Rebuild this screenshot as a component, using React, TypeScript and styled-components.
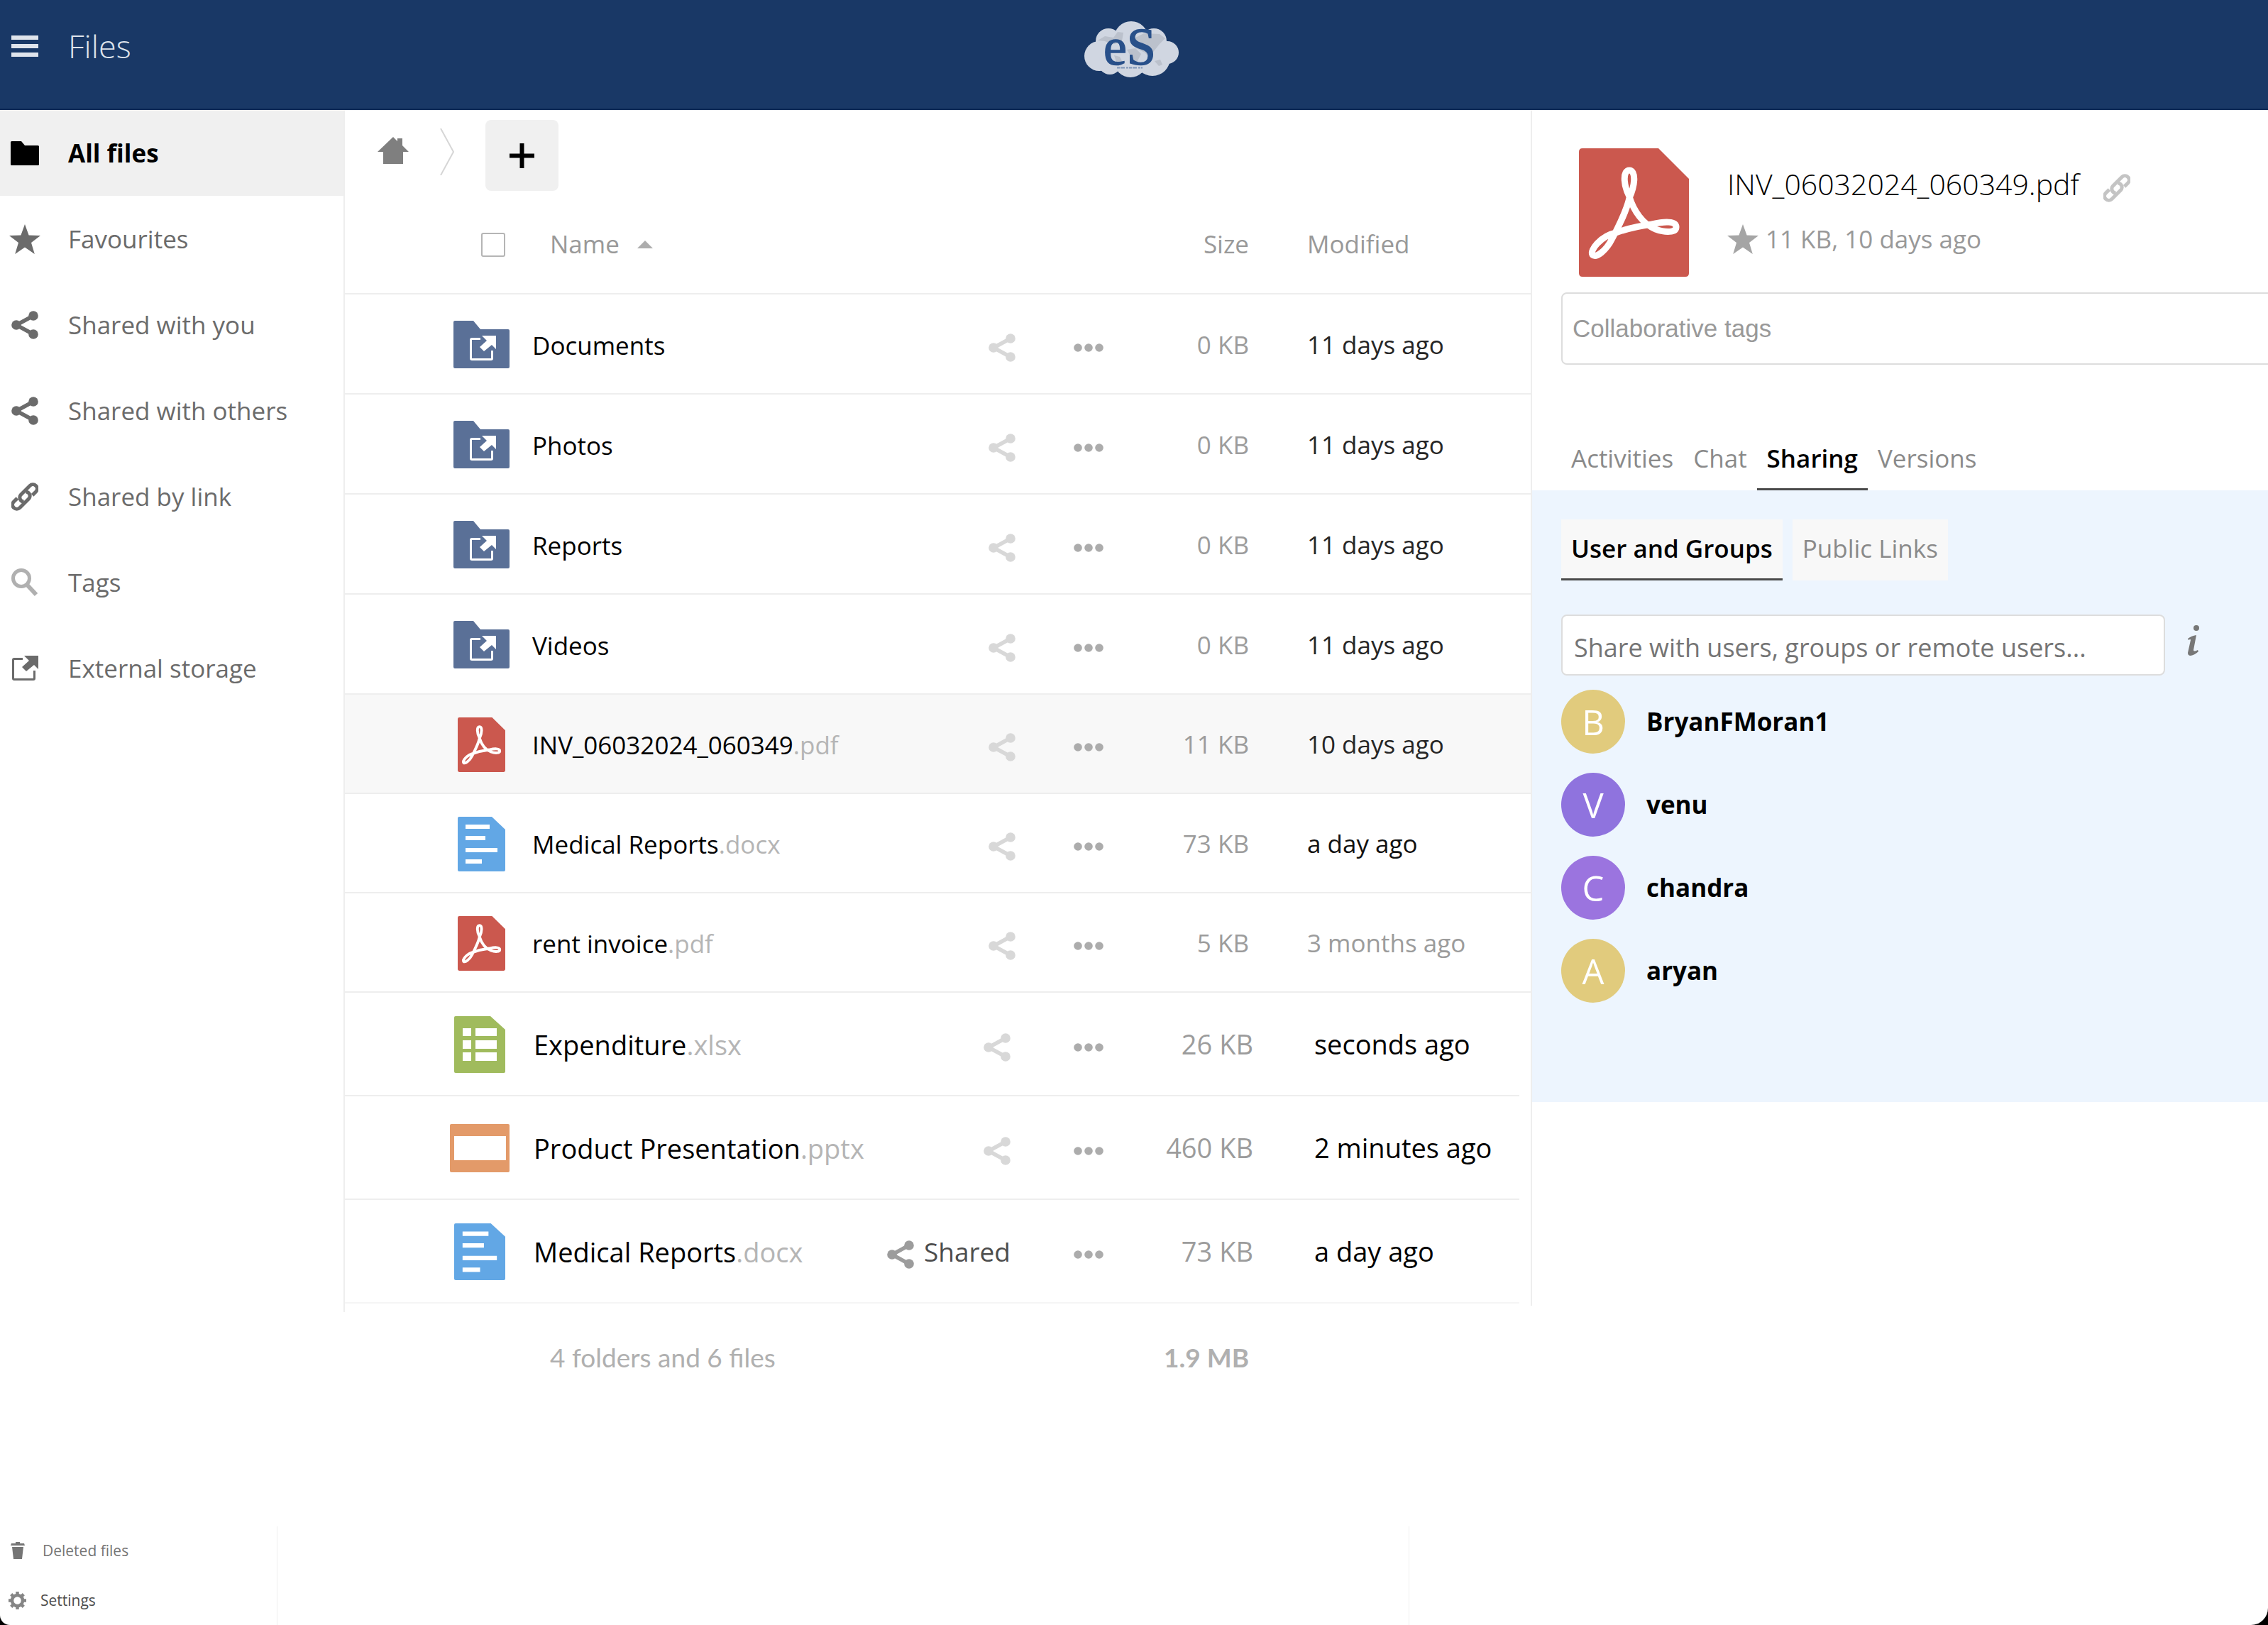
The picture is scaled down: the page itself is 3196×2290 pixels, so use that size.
import React from "react";
import styled, { createGlobalStyle, css } from "styled-components";

const sans = `"Open Sans", "Noto Sans", sans-serif`;

const colors = {
  navy: "#193866",
  rule: "#eeeeee",
  panel: "#edf5fe",
  muted: "#999999",
  nav: "#6b6b6b",
};

const GlobalStyle = createGlobalStyle`
  * { box-sizing: border-box; }
  body { margin: 0; background: #000; font-family: ${sans}; font-size: 35px; line-height: 48px; color: #000; }
  button, input { font: inherit; color: inherit; margin: 0; }
  button { border: 0; background: none; padding: 0; cursor: pointer; }
  a { color: inherit; text-decoration: none; }
  svg { display: block; flex: none; }
`;

const Page = styled.div`
  min-height: 100vh;
  display: flex;
  flex-direction: column;
  background: #fff;
  border-radius: 0 0 24px 14px;
  overflow: hidden;
`;

/* ---------- header ---------- */

const Header = styled.header`
  display: grid;
  grid-template-columns: 1fr auto 1fr;
  align-items: start;
  height: 155px;
  background: ${colors.navy};
  border-bottom: 2px solid #0f2a57;
`;

const AppMenu = styled.button`
  display: flex;
  align-items: center;
  gap: 42px;
  height: 130px;
  padding-left: 16px;
  color: #dfe4ec;
  font-size: 45px;
  font-weight: 300;
`;

const Logo = styled.a`
  padding: 20px 6px 0 0;
`;

/* ---------- columns ---------- */

const Columns = styled.div`
  display: flex;
`;

const Sidebar = styled.nav`
  flex: 0 0 486px;
  border-right: 2px solid ${colors.rule};
`;

const NavList = styled.ul`
  list-style: none;
  margin: 0;
  padding: 0;
`;

const NavLink = styled.a<{ $active?: boolean }>`
  display: flex;
  align-items: center;
  height: 121px;
  color: ${(p) => (p.$active ? "#000" : colors.nav)};
  background: ${(p) => (p.$active ? "#f0f0f0" : "transparent")};
  font-weight: ${(p) => (p.$active ? 700 : 400)};
`;

const NavIcon = styled.span<{ $faded?: boolean }>`
  display: flex;
  justify-content: center;
  width: 70px;
  margin-right: 26px;
  color: ${(p) => (p.$faded ? "#b0b0b0" : "inherit")};
`;

const FilePane = styled.main`
  flex: 1;
  min-width: 0;
  padding-bottom: 12px;
`;

const Toolbar = styled.div`
  display: flex;
  align-items: flex-start;
  height: 128px;
  padding: 14px 0 0 46px;
`;

const HomeLink = styled.a`
  padding: 24px 44px 0 0;
  color: #7f7f7f;
`;

const Crumb = styled.span`
  padding: 12px 44px 0 0;
`;

const AddButton = styled.button`
  display: flex;
  align-items: center;
  justify-content: center;
  width: 103px;
  height: 100px;
  border-radius: 8px;
  background: #f0f0f0;
`;

/* ---------- file table ---------- */

const Table = styled.table`
  width: 100%;
  table-layout: fixed;
  border-collapse: collapse;

  th, td { padding: 0; text-align: left; font-weight: 400; white-space: nowrap; }
`;

const Col = styled.col<{ $width?: number }>`
  width: ${(p) => (p.$width ? `${p.$width}px` : "auto")};
`;

const rule = (inset: number) => css`
  background-image: linear-gradient(${colors.rule}, ${colors.rule});
  background-position: left bottom;
  background-size: calc(100% - ${inset}px) 2px;
  background-repeat: no-repeat;
`;

const HeadRow = styled.tr`
  height: 132px;
  color: ${colors.muted};
  ${rule(0)}

  th { padding-bottom: 10px; }
`;

const SelectAll = styled.th`
  && { padding: 0 0 8px 192px; }
`;

const Checkbox = styled.input`
  appearance: none;
  display: block;
  width: 34px;
  height: 34px;
  border: 2px solid #b5b5b5;
  border-radius: 3px;
  background: #fff;
`;

const SortButton = styled.button`
  display: flex;
  align-items: center;
  gap: 25px;
  padding-left: 25px;
  color: ${colors.muted};
`;

type Density = "folder" | "file" | "roomy";

const rowHeight: Record<Density, number> = { folder: 141, file: 140, roomy: 146 };

const Row = styled.tr<{ $density: Density; $selected?: boolean }>`
  height: ${(p) => rowHeight[p.$density]}px;
  font-size: ${(p) => (p.$density === "roomy" ? 38 : 35)}px;
  background-color: ${(p) => (p.$selected ? "#f8f8f8" : "#fff")};
  ${(p) => rule(p.$density === "roomy" ? 16 : 0)}

  &:last-child {
    background-image: linear-gradient(#f5f5f5, #f5f5f5);
  }
`;

const IconCell = styled.td<{ $roomy: boolean }>`
  && { padding-left: ${(p) => (p.$roomy ? 140 : 142)}px; }
`;

const Thumb = styled.span`
  display: flex;
  justify-content: center;
  width: 100px;
`;

const NameCell = styled.td<{ $roomy: boolean }>`
  && { padding: ${(p) => (p.$roomy ? "0 0 0 2px" : "2px 0 0 0")}; }
`;

const Extension = styled.span`
  color: #b5b5b5;
`;

const ShareCell = styled.td<{ $roomy: boolean }>`
  && { padding: ${(p) => (p.$roomy ? "8px 52px 0 0" : "8px 45px 0 0")}; }
`;

const ShareButton = styled.button<{ $shared?: boolean }>`
  display: flex;
  align-items: center;
  gap: 14px;
  margin-left: auto;
  color: ${(p) => (p.$shared ? "#9c9c9c" : "#d8d8d8")};
`;

const SharedLabel = styled.span`
  color: #4d4d4d;
  font-size: 37px;
  padding-bottom: 8px;
`;

const MoreCell = styled.td`
  && { padding-top: 8px; }
`;

const MoreButton = styled.button`
  display: block;
  margin: 0 auto;
  color: #acacac;
`;

const SizeCell = styled.td<{ $roomy: boolean }>`
  && {
    padding: ${(p) => (p.$roomy ? "0 76px 2px 0" : "0 82px 0 0")};
    text-align: right;
    color: #9c9c9c;
  }
`;

const SizeHead = styled.th`
  && { padding-right: 82px; text-align: right; }
`;

const DateCell = styled.td<{ $roomy: boolean; $tone: string }>`
  && {
    padding: ${(p) => (p.$roomy ? "0 0 2px 10px" : "0")};
    color: ${(p) => p.$tone};
  }
`;

const Summary = styled.div`
  display: flex;
  justify-content: space-between;
  padding: 40px 1436px 0 775px;
  color: #b0b0b0;
  font-family: Lato, ${sans};
  font-size: 37px;
`;

/* ---------- details ---------- */

const Details = styled.aside`
  flex: 0 0 1039px;
  min-width: 0;
  margin-bottom: 9px;
  border-left: 2px solid ${colors.rule};
`;

const FileHead = styled.div`
  display: flex;
  gap: 54px;
  padding: 54px 0 0 66px;
`;

const FileTitle = styled.h2`
  display: flex;
  align-items: center;
  gap: 34px;
  margin: 22px 0 0;
  font-size: 41px;
  line-height: 56px;
  font-weight: 300;
`;

const CopyLink = styled.button`
  padding-top: 12px;
  color: #c4c4c4;
`;

const FileMeta = styled.div`
  display: flex;
  align-items: center;
  gap: 10px;
  margin-top: 26px;
  color: ${colors.muted};
`;

const MetaStar = styled.button`
  color: #a5a5a5;
`;

const TagsInput = styled.input`
  display: block;
  width: calc(100% - 20px);
  height: 102px;
  margin: 22px 0 0 41px;
  padding: 0 14px;
  border: 2px solid #dddddd;
  border-radius: 8px;
  font-family: "Liberation Sans", Arial, sans-serif;

  &::placeholder { color: ${colors.muted}; opacity: 1; }
`;

const Tabs = styled.div`
  display: flex;
  padding: 102px 0 0 41px;
`;

const Tab = styled.button<{ $active?: boolean }>`
  height: 75px;
  padding: 0 14px 12px;
  border-bottom: 3px solid ${(p) => (p.$active ? "#4a4a4a" : "transparent")};
  color: ${(p) => (p.$active ? "#000" : "#8a8a8a")};
  font-weight: ${(p) => (p.$active ? 600 : 400)};
`;

const SharePanel = styled.section`
  height: 862px;
  padding: 41px 0 0 41px;
  background: ${colors.panel};
`;

const SubTabs = styled.div`
  display: flex;
  gap: 14px;
`;

const SubTab = styled(Tab)`
  height: 86px;
  padding: 0 14px 2px;
  background: #f8f8f8;
`;

const ShareRow = styled.div`
  display: flex;
  align-items: center;
  gap: 31px;
  padding: 48px 0 20px;
`;

const ShareInput = styled.input`
  width: 851px;
  height: 86px;
  padding: 6px 16px 0;
  border: 2px solid #dddddd;
  border-radius: 8px;
  background: #fff;
  font-size: 36px;

  &::placeholder { color: #757575; opacity: 1; }
`;

const InfoButton = styled.button`
  padding-bottom: 14px;
  color: #777;
`;

const People = styled.ul`
  display: grid;
  gap: 27px;
  list-style: none;
  margin: 0;
  padding: 0;
`;

const Person = styled.li`
  display: flex;
  align-items: center;
  gap: 30px;
  font-weight: 700;
`;

const Avatar = styled.span<{ $color: string }>`
  display: flex;
  align-items: center;
  justify-content: center;
  width: 90px;
  height: 90px;
  border-radius: 50%;
  background: ${(p) => p.$color};
  color: #fff;
  font-size: 49px;
  font-weight: 500;
`;

/* ---------- bottom strip ---------- */

const BottomStrip = styled.footer`
  display: flex;
  height: 139px;
  margin-top: auto;
`;

const BottomNav = styled.nav`
  flex: 0 0 391px;
  border-right: 1px solid ${colors.rule};
  font-size: 21px;
  line-height: 28px;
`;

const BottomLink = styled.a<{ $strong?: boolean }>`
  display: flex;
  align-items: center;
  gap: ${(p) => (p.$strong ? 20 : 25)}px;
  height: 70px;
  padding: ${(p) => (p.$strong ? "0 0 2px 12px" : "0 0 2px 15px")};
  color: ${(p) => (p.$strong ? "#4d4d4d" : "#757575")};
`;

const BottomMiddle = styled.div`
  flex: 1;
  border-right: 1px solid ${colors.rule};
`;

const BottomRight = styled.div`
  flex: 0 0 1210px;
`;

/* ---------- drawings ---------- */

const MenuIcon = () => (
  <svg width="38" height="30" viewBox="0 0 38 30" fill="currentColor" aria-hidden="true">
    <path d="M0 0h38v6H0zM0 12h38v6H0zM0 24h38v6H0z" />
  </svg>
);

const CloudLogo = () => (
  <svg width="134" height="100" viewBox="0 -10 134 100" overflow="visible" role="img" aria-label="eS cloud">
    <g fill="#d0d6e1">
      <circle cx="66" cy="24" r="24" />
      <circle cx="34" cy="28" r="18" />
      <circle cx="21" cy="49" r="21" />
      <circle cx="98" cy="28" r="18" />
      <circle cx="117" cy="44" r="16" />
      <circle cx="36" cy="59" r="16" />
      <circle cx="65" cy="56" r="23" />
      <circle cx="96" cy="52" r="25" />
      <path d="M22 28h90v34H22z" />
    </g>
    <g fill="#aeb4bf" opacity="0.6">
      <path d="M19 27l10-6 12 2 6-8 8 1-2 12-10 4-8-1-6-3z" />
      <path d="M70 24l14-7 22 1 8 6-8 8-8 10-7 8-6-6-12-6z" />
      <path d="M60 40l12-2 8 8-6 12-6-4z" />
      <path d="M42 48l8 2 4 8-8 2zM99 56l8-2 3 7-5 2z" />
    </g>
    <text
      x="27"
      y="61"
      fontFamily="'Liberation Serif', serif"
      fontSize="74"
      fill="#28508a"
      stroke="#28508a"
      strokeWidth="1.5"
    >
      eS
    </text>
    <path d="M46 65.500h36" stroke="#7f95b8" strokeWidth="2" strokeDasharray="4 1 6 2 3 1" />
  </svg>
);

const FolderSolid = () => (
  <svg width="40" height="34" viewBox="0 0 40 34" fill="currentColor" aria-hidden="true">
    <path d="M1.500 0H15l5 6h18.500q1.500 0 1.500 1.500V32.500q0 1.500-1.500 1.500h-37Q0 34 0 32.500V1.500Q0 0 1.500 0z" />
  </svg>
);

const Star = () => (
  <svg width="44" height="42" viewBox="0 0 44 42" fill="currentColor" aria-hidden="true">
    <path d="M22 0l5.600 15.500L44 16 31 26l4.800 16L22 32.500 8.200 42 13 26 0 16l16.400-.5z" />
  </svg>
);

const ShareIcon = () => (
  <svg width="38" height="40" viewBox="0 0 38 40" aria-hidden="true">
    <path d="M31 7L7 20l24 13" fill="none" stroke="currentColor" strokeWidth="5.500" />
    <g fill="currentColor">
      <circle cx="31" cy="7" r="6.800" />
      <circle cx="7" cy="20" r="6.800" />
      <circle cx="31" cy="33" r="6.800" />
    </g>
  </svg>
);

const ChainIcon = () => (
  <svg width="38" height="40" viewBox="0 0 38 40" aria-hidden="true">
    <g transform="translate(19 20) rotate(-45)" fill="none" stroke="currentColor" strokeWidth="5">
      <path d="M9 6H16A6 6 0 0 0 16-6H-2A6 6 0 0 0-6 4" />
      <path d="M-9-6H-16A6 6 0 0 0-16 6H2A6 6 0 0 0 6-4" />
    </g>
  </svg>
);

const SearchIcon = () => (
  <svg width="38" height="40" viewBox="0 0 38 40" fill="none" stroke="currentColor" aria-hidden="true">
    <circle cx="14" cy="14" r="11.500" strokeWidth="5" />
    <path d="M22 23l13 14" strokeWidth="6" />
  </svg>
);

const externalShapes = (
  <>
    <path d="M16 4.500H4q-1.500 0-1.500 1.500V32q0 1.500 1.500 1.500H31q1.500 0 1.500-1.500V21" fill="none" stroke="currentColor" strokeWidth="3" />
    <path d="M18 0h20v19l-6-6-11 9-6-6 10-9z" fill="currentColor" />
  </>
);

const ExternalIcon = () => (
  <svg width="38" height="36" viewBox="0 0 38 36" aria-hidden="true">
    {externalShapes}
  </svg>
);

const HomeIcon = () => (
  <svg width="44" height="38" viewBox="0 0 44 38" fill="currentColor" aria-hidden="true">
    <path d="M22 0l6 6V2h7v10l9 9h-8v17H8V21H0z" />
  </svg>
);

const CrumbArrow = () => (
  <svg width="20" height="66" viewBox="0 0 20 66" fill="none" stroke="#d6d6d6" strokeWidth="2" aria-hidden="true">
    <path d="M1 0l18 33L1 66" />
  </svg>
);

const PlusIcon = () => (
  <svg width="35" height="35" viewBox="0 0 35 35" stroke="#000" strokeWidth="6" aria-hidden="true">
    <path d="M17.500 0v35M0 17.500h35" />
  </svg>
);

const SortArrow = () => (
  <svg width="22" height="11" viewBox="0 0 22 11" fill="#adadad" aria-hidden="true">
    <path d="M11 0l11 11H0z" />
  </svg>
);

const MoreIcon = () => (
  <svg width="42" height="12" viewBox="0 0 42 12" fill="currentColor" aria-hidden="true">
    <circle cx="6" cy="6" r="5.800" />
    <circle cx="21" cy="6" r="5.800" />
    <circle cx="36" cy="6" r="5.800" />
  </svg>
);

const FolderExternal = () => (
  <svg width="79" height="67" viewBox="0 0 79 67" aria-hidden="true">
    <path d="M2 0h26l10 12h39q2 0 2 2v51q0 2-2 2H2q-2 0-2-2V2Q0 0 2 0z" fill="#5a7097" />
    <g transform="translate(22 21)" color="#fff">
      {externalShapes}
    </g>
  </svg>
);

const PdfIcon = ({ width, height }: { width: number; height: number }) => (
  <svg width={width} height={height} viewBox="0 0 155 181" preserveAspectRatio="none" aria-hidden="true">
    <path d="M5 0H112l43 43V176q0 5-5 5H5q-5 0-5-5V5Q0 0 5 0z" fill="#cb584e" />
    <path
      d="M71 68C62 50 62 31 71 31C80 31 80 50 71 70C67 88 58 106 47 127C38 145 24 155 19 150C15 144 30 124 52 119C66 114 88 109 103 107C120 103 137 102 137 111C137 119 122 119 108 114C90 107 77 88 71 68Z"
      fill="none"
      stroke="#fff"
      strokeWidth="9"
    />
  </svg>
);

const DocIcon = ({ large }: { large: boolean }) => (
  <svg width={large ? 72 : 67} height={large ? 80 : 77} viewBox="0 0 67 77" preserveAspectRatio="none" aria-hidden="true">
    <path d="M2 0h46l19 18v57q0 2-2 2H2q-2 0-2-2V2Q0 0 2 0z" fill="#62a7e5" />
    <path d="M11 11h34v6H11zM11 27h28v6H11zM11 44h45v6H11zM11 60h23v6H11z" fill="#fff" />
  </svg>
);

const SheetIcon = () => (
  <svg width="72" height="80" viewBox="0 0 72 80" aria-hidden="true">
    <path d="M2 0h49l21 19v59q0 2-2 2H2q-2 0-2-2V2Q0 0 2 0z" fill="#a0bb5d" />
    <path d="M12 17h12v11H12zM30 17h30v11H30zM12 34h12v12H12zM30 34h30v12H30zM12 51h12v12H12zM30 51h30v12H30z" fill="#fff" />
  </svg>
);

const SlidesIcon = () => (
  <svg width="84" height="68" viewBox="0 0 84 68" aria-hidden="true">
    <rect width="84" height="68" rx="2" fill="#e39a69" />
    <path d="M6 17h73v34H6z" fill="#fff" />
  </svg>
);

const InfoIcon = () => (
  <svg width="18" height="43" viewBox="0 0 18 43" fill="currentColor" aria-hidden="true">
    <circle cx="13" cy="4" r="4" />
    <path d="M1 19q5-4 12-5L9 35q0 3 6 0l1 2q-5 5-11 6-4 0-4-4l4-18q0-2-3 0z" />
  </svg>
);

const TrashIcon = () => (
  <svg width="20" height="24" viewBox="0 0 20 24" fill="currentColor" aria-hidden="true">
    <path d="M7 0h6v2h6l1 3H0l1-3h6zM2 7h16l-2 17H4z" />
  </svg>
);

const GearIcon = () => (
  <svg width="25" height="25" viewBox="0 0 25 25" fill="none" stroke="#858585" aria-hidden="true">
    <circle cx="12.500" cy="12.500" r="7.500" strokeWidth="4.500" />
    <path d="M12.500 0v4M12.500 21v4M0 12.500h4M21 12.500h4M3.700 3.700l3 3M18.300 18.300l3 3M3.700 21.300l3-3M18.300 6.700l3-3" strokeWidth="4.500" />
  </svg>
);

/* ---------- data ---------- */

type Kind = "folder" | "pdf" | "doc" | "sheet" | "slides";

interface FileItem {
  name: string;
  ext?: string;
  kind: Kind;
  density: Density;
  size: string;
  date: string;
  tone: string;
  selected?: boolean;
  shared?: boolean;
}

const files: FileItem[] = [
  { name: "Documents", kind: "folder", density: "folder", size: "0 KB", date: "11 days ago", tone: "#262626" },
  { name: "Photos", kind: "folder", density: "folder", size: "0 KB", date: "11 days ago", tone: "#262626" },
  { name: "Reports", kind: "folder", density: "folder", size: "0 KB", date: "11 days ago", tone: "#262626" },
  { name: "Videos", kind: "folder", density: "folder", size: "0 KB", date: "11 days ago", tone: "#262626" },
  { name: "INV_06032024_060349", ext: ".pdf", kind: "pdf", density: "file", size: "11 KB", date: "10 days ago", tone: "#262626", selected: true },
  { name: "Medical Reports", ext: ".docx", kind: "doc", density: "file", size: "73 KB", date: "a day ago", tone: "#111" },
  { name: "rent invoice", ext: ".pdf", kind: "pdf", density: "file", size: "5 KB", date: "3 months ago", tone: "#9c9c9c" },
  { name: "Expenditure", ext: ".xlsx", kind: "sheet", density: "roomy", size: "26 KB", date: "seconds ago", tone: "#000" },
  { name: "Product Presentation", ext: ".pptx", kind: "slides", density: "roomy", size: "460 KB", date: "2 minutes ago", tone: "#000" },
  { name: "Medical Reports", ext: ".docx", kind: "doc", density: "roomy", size: "73 KB", date: "a day ago", tone: "#000", shared: true },
];

const people = [
  { name: "BryanFMoran1", color: "#e1cb7d" },
  { name: "venu", color: "#8f73de" },
  { name: "chandra", color: "#9b74df" },
  { name: "aryan", color: "#e1cb7d" },
];

const navItems = [
  { label: "All files", icon: <FolderSolid />, active: true },
  { label: "Favourites", icon: <Star /> },
  { label: "Shared with you", icon: <ShareIcon /> },
  { label: "Shared with others", icon: <ShareIcon /> },
  { label: "Shared by link", icon: <ChainIcon /> },
  { label: "Tags", icon: <SearchIcon />, faded: true },
  { label: "External storage", icon: <ExternalIcon /> },
];

const FileThumb = ({ kind, large }: { kind: Kind; large: boolean }) => {
  if (kind === "folder") return <FolderExternal />;
  if (kind === "pdf") return <PdfIcon width={67} height={77} />;
  if (kind === "doc") return <DocIcon large={large} />;
  if (kind === "sheet") return <SheetIcon />;
  return <SlidesIcon />;
};

const FileRow = ({ file }: { file: FileItem }) => {
  const roomy = file.density === "roomy";
  return (
    <Row $density={file.density} $selected={file.selected}>
      <IconCell $roomy={roomy}>
        <Thumb>
          <FileThumb kind={file.kind} large={roomy} />
        </Thumb>
      </IconCell>
      <NameCell $roomy={roomy}>
        <a href="#file">
          {file.name}
          {file.ext && <Extension>{file.ext}</Extension>}
        </a>
      </NameCell>
      <ShareCell $roomy={roomy}>
        <ShareButton type="button" aria-label="Share" $shared={file.shared}>
          <ShareIcon />
          {file.shared && <SharedLabel>Shared</SharedLabel>}
        </ShareButton>
      </ShareCell>
      <MoreCell>
        <MoreButton type="button" aria-label="More actions">
          <MoreIcon />
        </MoreButton>
      </MoreCell>
      <SizeCell $roomy={roomy}>{file.size}</SizeCell>
      <DateCell $roomy={roomy} $tone={file.tone}>
        {file.date}
      </DateCell>
    </Row>
  );
};

export default function App() {
  return (
    <Page>
      <GlobalStyle />
      <Header>
        <AppMenu type="button">
          <MenuIcon />
          Files
        </AppMenu>
        <Logo href="#home" aria-label="Home">
          <CloudLogo />
        </Logo>
      </Header>

      <Columns>
        <Sidebar>
          <NavList>
            {navItems.map((item) => (
              <li key={item.label}>
                <NavLink href="#view" $active={item.active}>
                  <NavIcon $faded={item.faded}>{item.icon}</NavIcon>
                  {item.label}
                </NavLink>
              </li>
            ))}
          </NavList>
        </Sidebar>

        <FilePane>
          <Toolbar>
            <HomeLink href="#root" aria-label="Home folder">
              <HomeIcon />
            </HomeLink>
            <Crumb>
              <CrumbArrow />
            </Crumb>
            <AddButton type="button" aria-label="New">
              <PlusIcon />
            </AddButton>
          </Toolbar>
          <Table>
            <colgroup>
              <Col $width={264} />
              <Col />
              <Col $width={236} />
              <Col $width={116} />
              <Col $width={250} />
              <Col $width={315} />
            </colgroup>
            <thead>
              <HeadRow>
                <SelectAll>
                  <Checkbox type="checkbox" aria-label="Select all" />
                </SelectAll>
                <th>
                  <SortButton type="button">
                    Name
                    <SortArrow />
                  </SortButton>
                </th>
                <th />
                <th />
                <SizeHead>Size</SizeHead>
                <th>Modified</th>
              </HeadRow>
            </thead>
            <tbody>
              {files.map((file, i) => (
                <FileRow key={i} file={file} />
              ))}
            </tbody>
          </Table>
        </FilePane>

        <Details>
          <FileHead>
            <PdfIcon width={155} height={181} />
            <div>
              <FileTitle>
                INV_06032024_060349.pdf
                <CopyLink type="button" aria-label="Copy link">
                  <ChainIcon />
                </CopyLink>
              </FileTitle>
              <FileMeta>
                <MetaStar type="button" aria-label="Favourite">
                  <Star />
                </MetaStar>
                11 KB, 10 days ago
              </FileMeta>
            </div>
          </FileHead>
          <TagsInput aria-label="Collaborative tags" placeholder="Collaborative tags" />
          <Tabs>
            <Tab type="button">Activities</Tab>
            <Tab type="button">Chat</Tab>
            <Tab type="button" $active>
              Sharing
            </Tab>
            <Tab type="button">Versions</Tab>
          </Tabs>
          <SharePanel>
            <SubTabs>
              <SubTab type="button" $active>
                User and Groups
              </SubTab>
              <SubTab type="button">Public Links</SubTab>
            </SubTabs>
            <ShareRow>
              <ShareInput
                aria-label="Share with users, groups or remote users"
                placeholder="Share with users, groups or remote users..."
              />
              <InfoButton type="button" aria-label="Sharing help">
                <InfoIcon />
              </InfoButton>
            </ShareRow>
            <People>
              {people.map((p) => (
                <Person key={p.name}>
                  <Avatar $color={p.color}>{p.name[0].toUpperCase()}</Avatar>
                  {p.name}
                </Person>
              ))}
            </People>
          </SharePanel>
        </Details>
      </Columns>

      <Summary>
        <span>4 folders and 6 files</span>
        <strong>1.9 MB</strong>
      </Summary>

      <BottomStrip>
        <BottomNav>
          <BottomLink href="#trash">
            <TrashIcon />
            Deleted files
          </BottomLink>
          <BottomLink href="#settings" $strong>
            <GearIcon />
            Settings
          </BottomLink>
        </BottomNav>
        <BottomMiddle />
        <BottomRight />
      </BottomStrip>
    </Page>
  );
}
